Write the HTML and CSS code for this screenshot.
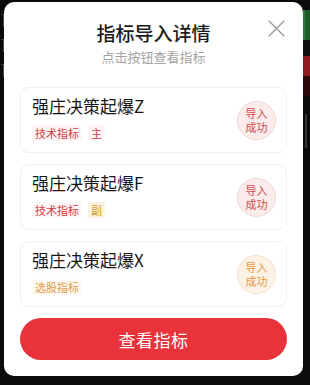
FILE: index.html
```html
<!DOCTYPE html>
<html lang="zh-CN">
<head>
<meta charset="utf-8">
<title>指标导入详情</title>
<link rel="stylesheet" href="styles.css">
</head>
<body>
<div class="screen">
  <div class="edge-left">
    <span class="ghost"></span>
    <span class="ghost"></span>
    <span class="ghost"></span>
  </div>
  <div class="modal">
    <button class="close" aria-label="关闭">
      <svg width="17" height="17" viewBox="0 0 17 17"><path d="M1 1 L16 16 M16 1 L1 16" stroke="#9a9a9a" stroke-width="1.4" fill="none" stroke-linecap="round"/></svg>
    </button>
    <h1 class="title">指标导入详情</h1>
    <p class="subtitle">点击按钮查看指标</p>
    <div class="list">
      <div class="card">
        <div class="info">
          <div class="name">强庄决策起爆Z</div>
          <div class="tags">
            <span class="tag red">技术指标</span>
            <span class="tag red">主</span>
          </div>
        </div>
        <div class="badge red"><span>导入</span><span>成功</span></div>
      </div>
      <div class="card">
        <div class="info">
          <div class="name">强庄决策起爆F</div>
          <div class="tags">
            <span class="tag red">技术指标</span>
            <span class="tag gold">副</span>
          </div>
        </div>
        <div class="badge red"><span>导入</span><span>成功</span></div>
      </div>
      <div class="card">
        <div class="info">
          <div class="name">强庄决策起爆X</div>
          <div class="tags">
            <span class="tag orange">选股指标</span>
          </div>
        </div>
        <div class="badge orange"><span>导入</span><span>成功</span></div>
      </div>
    </div>
    <button class="primary">查看指标</button>
  </div>
  <div class="edge-right">
    <span class="blk green"></span>
    <span class="blk dark"></span>
    <span class="blk red"></span>
    <span class="blk darkred"></span>
    <span class="blk text"></span>
  </div>
</div>
</body>
</html>
```

FILE: styles.css
```css
html, body {
  margin: 0;
  padding: 0;
  background: #0b0b0b;
}
body {
  font-family: "Noto Sans CJK SC", "Noto Sans", sans-serif;
  width: 310px;
  height: 385px;
  overflow: hidden;
}
.screen {
  display: grid;
  grid-template-columns: 4px 299px 7px;
  height: 385px;
}
.edge-left {
  display: flex;
  flex-direction: column;
  gap: 12px;
  padding-top: 14px;
  overflow: hidden;
}
.ghost {
  display: block;
  width: 2px;
  height: 12px;
  margin-left: 1px;
  border-right: 1px solid #4a4a4a;
  border-top: 1px solid #3a3a3a;
}
.edge-right {
  display: flex;
  flex-direction: column;
  padding-top: 10px;
  overflow: hidden;
}
.blk {
  display: block;
}
.blk.green { background: #1f5a2a; height: 30px; box-shadow: inset 2px 0 0 #2c7a3a; }
.blk.dark { background: #111; height: 16px; }
.blk.red { background: #8d1b1f; height: 20px; }
.blk.darkred { background: #2a0808; height: 20px; }
.blk.text { height: 34px; margin-top: 18px; width: 2px; margin-left: 2px; background: #333; }

.modal {
  position: relative;
  margin-top: 2px;
  height: 374px;
  box-sizing: border-box;
  background: #fff;
  border-radius: 10px;
  padding: 19px 16px 16px;
  display: flex;
  flex-direction: column;
}
.close {
  position: absolute;
  top: 18px;
  right: 18px;
  width: 17px;
  height: 17px;
  padding: 0;
  border: 0;
  background: none;
  display: flex;
}
.title {
  margin: 0;
  text-align: center;
  font-size: 19px;
  line-height: 24px;
  font-weight: 500;
  color: #1c1c1c;
}
.subtitle {
  margin: 3px 0 0;
  text-align: center;
  font-size: 13px;
  line-height: 18px;
  color: #a3a3a3;
}
.list {
  margin-top: 21px;
  display: flex;
  flex-direction: column;
  gap: 11px;
}
.card {
  display: flex;
  align-items: center;
  justify-content: space-between;
  border: 1px solid #f0eeee;
  border-radius: 9px;
  padding: 7px 10px 11px 11px;
}
.info {
  display: flex;
  flex-direction: column;
}
.name {
  font-size: 17px;
  line-height: 22px;
  color: #161616;
}
.tags {
  display: flex;
  gap: 6px;
  margin-top: 8px;
}
.tag {
  font-size: 11px;
  line-height: 16px;
  padding: 0 3px;
  border-radius: 2px;
}
.tag.red { color: #cf3d3f; background: #fef6f6; }
.tag.gold { color: #d99b3a; background: #fcf3df; }
.tag.orange { color: #e29b45; background: #fef9f2; }
.badge {
  width: 39px;
  height: 39px;
  box-sizing: border-box;
  border-radius: 50%;
  display: flex;
  flex-direction: column;
  align-items: center;
  justify-content: center;
  font-size: 11px;
  line-height: 14px;
  margin-top: 4px;
}
.badge span {
  display: block;
  height: 14px;
}
.badge.red { background: #fbebeb; border: 1px solid #f1d6d6; color: #d04a4b; }
.badge.orange { background: #fdf2e6; border: 1px solid #f4e1ca; color: #e39a45; }
.primary {
  margin-top: 11px;
  height: 42px;
  border: 0;
  border-radius: 21px;
  background: #e8333a;
  color: #fff;
  font-family: "Noto Sans CJK SC", "Noto Sans", sans-serif;
  font-size: 17px;
  letter-spacing: 0.5px;
}
```
